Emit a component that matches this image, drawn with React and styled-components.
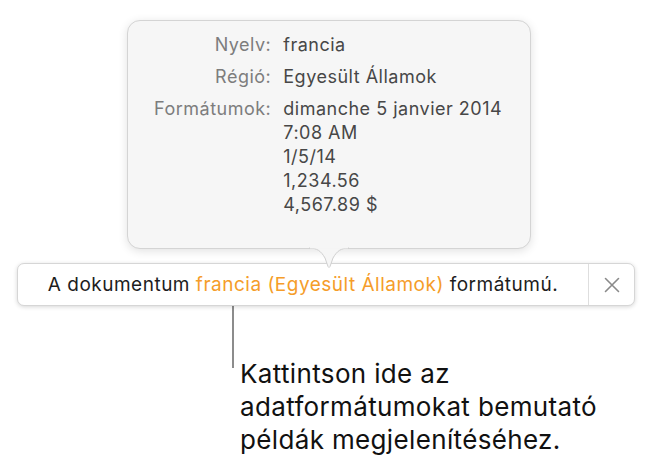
import styled, { createGlobalStyle } from 'styled-components'

const GlobalStyle = createGlobalStyle`
  html, body {
    margin: 0;
    padding: 0;
    background: #ffffff;
  }
  body {
    font-family: Inter, "Liberation Sans", sans-serif;
    -webkit-font-smoothing: antialiased;
  }
`

const Page = styled.div`
  width: 657px;
  height: 465px;
  display: flex;
  flex-direction: column;
  overflow: hidden;
`

const Popover = styled.div`
  position: relative;
  box-sizing: border-box;
  margin: 20px 0 0 127px;
  width: 404px;
  height: 229px;
  padding: 12px 0 0 26px;
  background: #f6f6f6;
  border: 1px solid #d4d4d4;
  border-radius: 13px;
  box-shadow: 0 2px 10px rgba(0, 0, 0, 0.12);
  z-index: 2;
`

const Arrow = styled.svg`
  position: absolute;
  left: 181px;
  bottom: -21px;
  overflow: visible;
`

const InfoGrid = styled.div`
  display: grid;
  grid-template-columns: auto auto;
  justify-content: start;
  column-gap: 12px;
  row-gap: 8px;
  font-size: 18px;
  letter-spacing: 0.5px;
  line-height: 24px;
`

const Label = styled.div`
  justify-self: end;
  color: #7d7d7d;
`

const Value = styled.div`
  color: #474747;
  display: flex;
  flex-direction: column;
`

const Bar = styled.div`
  box-sizing: border-box;
  margin: 14px 0 0 17px;
  width: 618px;
  height: 43px;
  display: flex;
  align-items: stretch;
  background: #ffffff;
  border: 1px solid #d6d6d6;
  border-radius: 7px;
  box-shadow: 0 1px 4px rgba(0, 0, 0, 0.16);
  z-index: 1;
`

const Message = styled.div`
  flex: 1;
  display: flex;
  align-items: center;
  justify-content: center;
  font-size: 19px;
  letter-spacing: 0.5px;
  color: #1d1d1d;
  white-space: nowrap;
`

const Accent = styled.span`
  color: #f59d2a;
`

const CloseButton = styled.div`
  width: 45px;
  display: flex;
  align-items: center;
  justify-content: center;
  border-left: 1px solid #dedede;
`

const Callout = styled.div`
  display: flex;
  align-items: flex-start;
  margin-left: 232px;
`

const Leader = styled.div`
  width: 2px;
  height: 62px;
  background: #8c8c8c;
`

const CalloutText = styled.div`
  margin: 51px 0 0 6px;
  font-size: 26px;
  letter-spacing: 0.35px;
  line-height: 33px;
  color: #111111;
`

const rows = [
  { label: 'Nyelv:', values: ['francia'] },
  { label: 'Régió:', values: ['Egyesült Államok'] },
  {
    label: 'Formátumok:',
    values: ['dimanche 5 janvier 2014', '7:08 AM', '1/5/14', '1,234.56', '4,567.89 $'],
  },
]

export default function App() {
  return (
    <Page>
      <GlobalStyle />
      <Popover>
        <InfoGrid>
          {rows.map((r) => [
            <Label key={r.label}>{r.label}</Label>,
            <Value key={r.label + 'v'}>
              {r.values.map((v) => (
                <span key={v}>{v}</span>
              ))}
            </Value>,
          ])}
        </InfoGrid>
        <Arrow width="40" height="21" viewBox="0 0 40 21">
          <path d="M0 0 C8 0 12 3 16 10 L19 18.5 Q20 20.5 21 18.5 L24 10 C28 3 32 0 40 0 Z" fill="#f6f6f6" />
          <path d="M0 0 C8 0 12 3 16 10 L19 18.5 Q20 20.5 21 18.5 L24 10 C28 3 32 0 40 0" fill="none" stroke="#d0d0d0" strokeWidth="1" />
          <rect x="1" y="-2" width="38" height="2.4" fill="#f6f6f6" />
        </Arrow>
      </Popover>
      <Bar>
        <Message>
          A dokumentum&nbsp;<Accent>francia (Egyesült Államok)</Accent>&nbsp;formátumú.
        </Message>
        <CloseButton>
          <svg width="16" height="16" viewBox="0 0 16 16">
            <path d="M1.5 1.5 L14.5 14.5 M14.5 1.5 L1.5 14.5" stroke="#8a8a8a" strokeWidth="1.6" strokeLinecap="round" />
          </svg>
        </CloseButton>
      </Bar>
      <Callout>
        <Leader />
        <CalloutText>
          Kattintson ide az
          <br />
          adatformátumokat bemutató
          <br />
          példák megjelenítéséhez.
        </CalloutText>
      </Callout>
    </Page>
  )
}
